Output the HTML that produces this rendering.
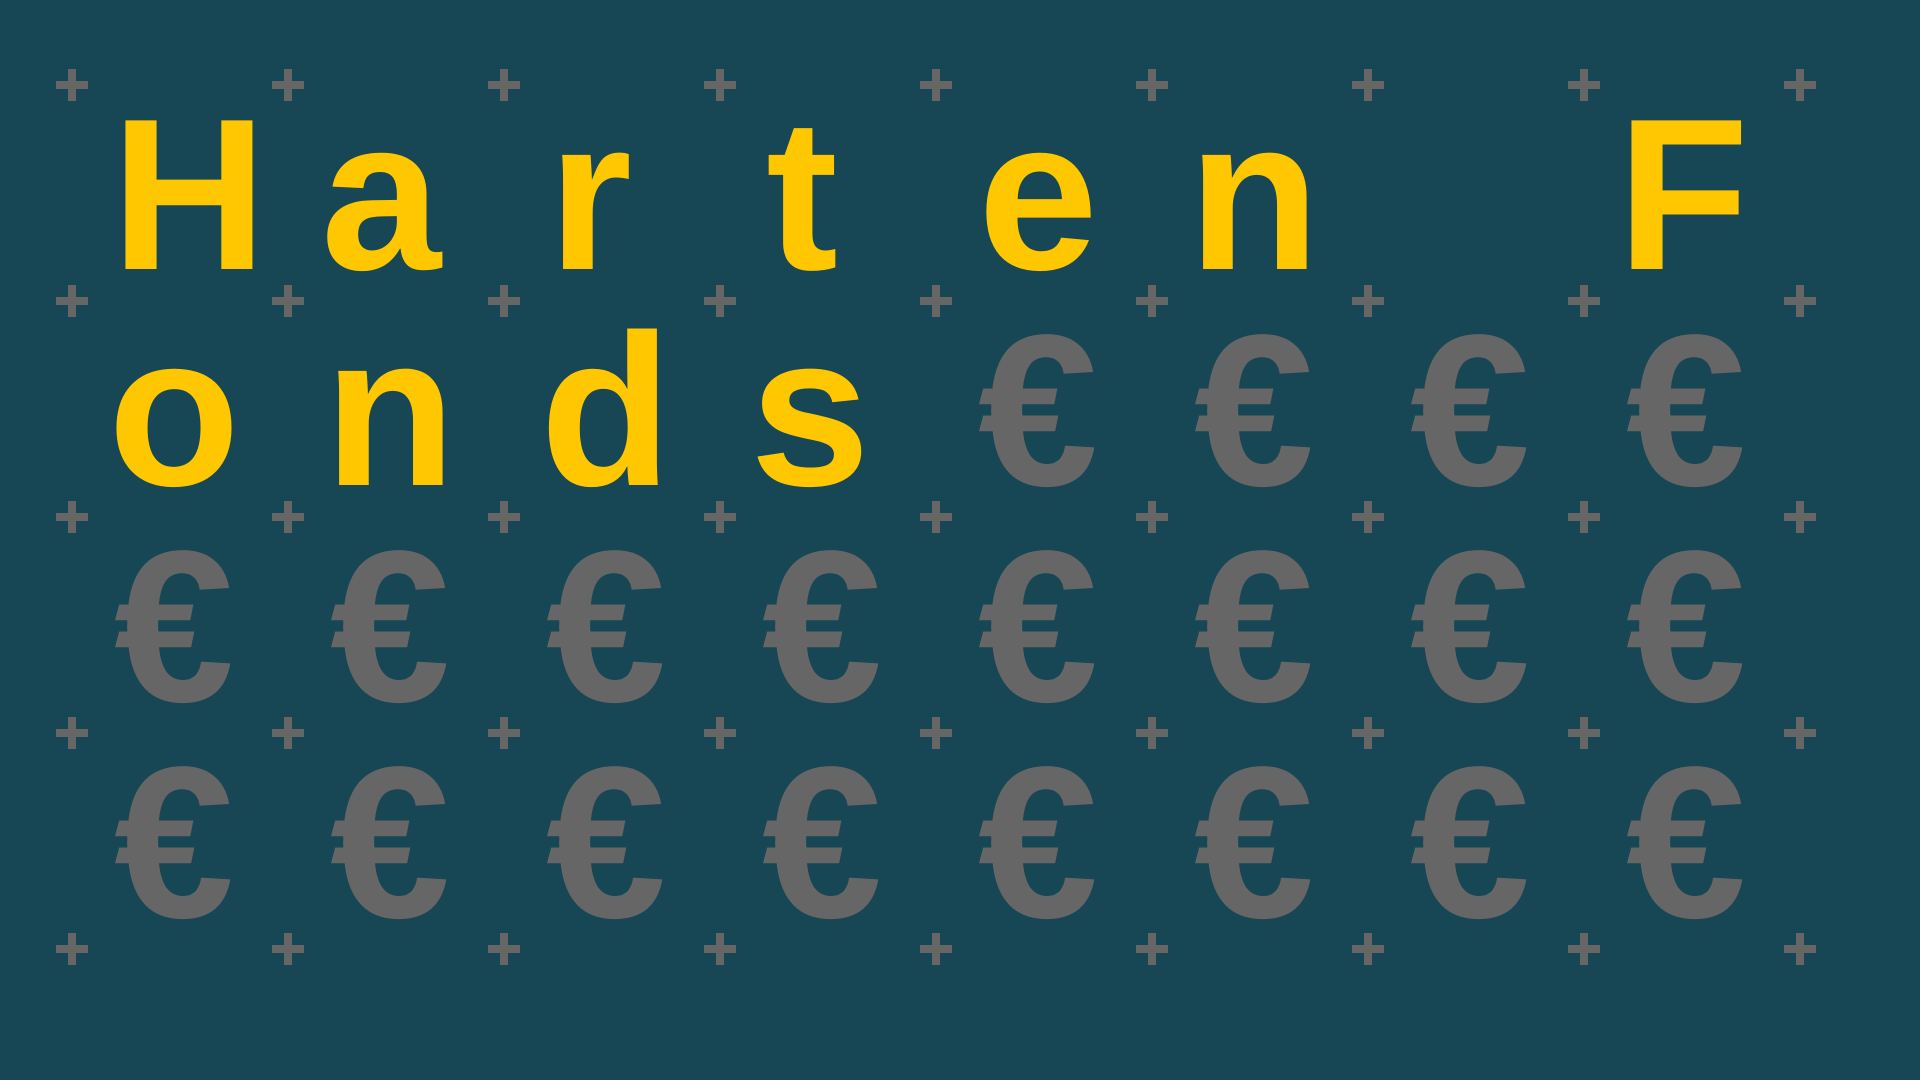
<!DOCTYPE html>
<html><head><meta charset="utf-8"><style>
html,body{margin:0;padding:0}
body{width:1920px;height:1080px;background:#174654;position:relative;overflow:hidden;font-family:"Liberation Sans",Arial,sans-serif;font-weight:bold}
.c{position:absolute;width:216px;height:216px;text-align:center;font-size:216px;line-height:216px}
.y{color:#FFC700}
.g{color:#666666}
.p{position:absolute;width:32px;height:32px}
.p:before{content:"";position:absolute;left:12px;top:0;width:8px;height:32px;background:#666}
.p:after{content:"";position:absolute;left:0;top:12px;width:32px;height:8px;background:#666}
</style></head><body>
<div id="cells"></div>
<script>
var h='';
for(var r=0;r<5;r++)for(var c=0;c<9;c++){h+='<div class="p" style="left:'+(56+216*c)+'px;top:'+(69+216*r)+'px"></div>';}
var rows=[['H','a','r','t','e','n','','F'],['o','n','d','s','€','€','€','€'],['€','€','€','€','€','€','€','€'],['€','€','€','€','€','€','€','€']];
var adj={'H':15,'a':-9,'r':-16,'t':-20,'s':-12,'F':-3};
for(var r=0;r<4;r++)for(var c=0;c<8;c++){var t=rows[r][c];if(!t)continue;var a=(r==0&&adj[t]!==undefined)?adj[t]:(t=='s'?adj.s:0);h+='<div class="c '+(t=='€'?'g':'y')+'" style="left:'+(66+216*c+a)+'px;top:'+(86+216*r)+'px">'+t+'</div>';}
document.getElementById('cells').innerHTML=h;
</script>
</body></html>
